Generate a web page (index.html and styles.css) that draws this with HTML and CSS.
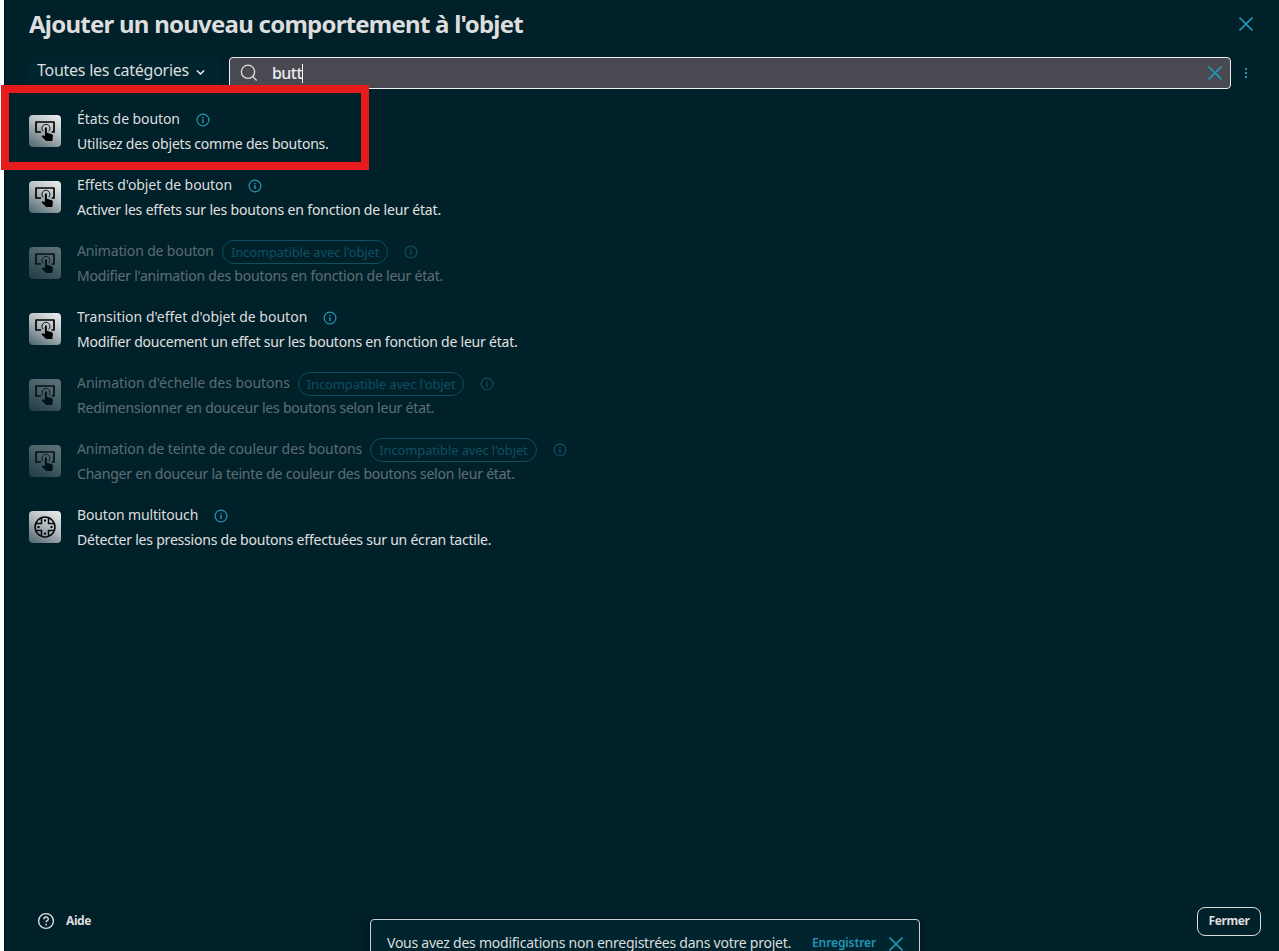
FILE: index.html
```html
<!DOCTYPE html>
<html lang="fr">
<head>
<meta charset="utf-8">
<title>Ajouter un nouveau comportement à l'objet</title>
<link rel="stylesheet" href="styles.css">
</head>
<body>
<svg class="sprite" aria-hidden="true">
  <symbol id="touch" viewBox="0 0 32 32">
    <path d="M12 17H7V7H25V17H22.500" fill="none" stroke="#000" stroke-width="1.700" stroke-linejoin="round"/>
    <path d="M14.300 16.300a4 4 0 1 1 5.300 0" fill="none" stroke="#000" stroke-width=".9"/>
    <path d="M15.900 12.900q1-1.400 2 0V17.800l5 1.400q1.200.4 1 1.800L23.300 26h-6.200l-4.500-4.600 1-1.100 2.300.7z"/>
  </symbol>
  <symbol id="pad" viewBox="0 0 32 32">
    <g fill="none" stroke="#050808" stroke-width="1.500">
      <circle cx="16" cy="16" r="10"/>
      <path d="M12.500 7v5.500H7M19.500 7v5.500H25M12.500 25v-5.500H7M19.500 25v-5.500H25"/>
    </g>
    <path d="M15 8.500h2v2h-2zM15 21.500h2v2h-2zM8.500 15h2v2h-2zM21.500 15h2v2h-2z"/>
  </symbol>
  <symbol id="info" viewBox="0 0 14 14">
    <circle cx="7" cy="7" r="5.900" fill="none" stroke="currentColor" stroke-width="1.200"/>
    <path d="M6.300 4h1.400v1.200H6.300zM6 6.200h1.700v3.800H6.300V7.200H6z" fill="currentColor"/>
  </symbol>
  <symbol id="cross" viewBox="0 0 14 14">
    <path d="M.5.500l13 13M13.500.500l-13 13" fill="none" stroke="currentColor" stroke-width="1.600"/>
  </symbol>
</svg>
<main class="dialog">
  <header class="title-row">
    <h1>Ajouter un nouveau comportement à l'objet</h1>
    <svg class="cross"><use href="#cross"/></svg>
  </header>
  <div class="toolbar">
    <div class="select">
      <span>Toutes les catégories</span>
      <svg class="chevron" viewBox="0 0 10 7"><path d="M1 1.200l4 4 4-4" fill="none" stroke="currentColor" stroke-width="1.700"/></svg>
    </div>
    <div class="search">
      <svg class="magnifier" viewBox="0 0 18 18"><circle cx="8" cy="7.800" r="6.600"/><path d="M12.700 12.500l4 4"/></svg>
      <span class="query">butt</span><i class="caret"></i>
      <svg class="cross"><use href="#cross"/></svg>
    </div>
    <svg class="more" viewBox="0 0 4 12"><path d="M1 1h2v2H1zM1 5h2v2H1zM1 9h2v2H1z" fill="currentColor"/></svg>
  </div>
  <ul class="list">
    <li class="item">
      <svg class="thumb"><use href="#touch"/></svg>
      <div class="body">
        <div class="heading"><span class="name snug">États de bouton</span><svg class="info"><use href="#info"/></svg></div>
        <p>Utilisez des objets comme des boutons.</p>
      </div>
    </li>
    <li class="item">
      <svg class="thumb"><use href="#touch"/></svg>
      <div class="body">
        <div class="heading"><span class="name snug">Effets d'objet de bouton</span><svg class="info"><use href="#info"/></svg></div>
        <p class="loose">Activer les effets sur les boutons en fonction de leur état.</p>
      </div>
    </li>
    <li class="item disabled">
      <svg class="thumb"><use href="#touch"/></svg>
      <div class="body">
        <div class="heading"><span class="name tight">Animation de bouton</span><span class="chip">Incompatible avec l'objet</span><svg class="info"><use href="#info"/></svg></div>
        <p>Modifier l'animation des boutons en fonction de leur état.</p>
      </div>
    </li>
    <li class="item">
      <svg class="thumb"><use href="#touch"/></svg>
      <div class="body">
        <div class="heading"><span class="name wide">Transition d'effet d'objet de bouton</span><svg class="info"><use href="#info"/></svg></div>
        <p>Modifier doucement un effet sur les boutons en fonction de leur état.</p>
      </div>
    </li>
    <li class="item disabled">
      <svg class="thumb"><use href="#touch"/></svg>
      <div class="body">
        <div class="heading"><span class="name">Animation d'échelle des boutons</span><span class="chip">Incompatible avec l'objet</span><svg class="info"><use href="#info"/></svg></div>
        <p>Redimensionner en douceur les boutons selon leur état.</p>
      </div>
    </li>
    <li class="item disabled">
      <svg class="thumb"><use href="#touch"/></svg>
      <div class="body">
        <div class="heading"><span class="name snug">Animation de teinte de couleur des boutons</span><span class="chip">Incompatible avec l'objet</span><svg class="info"><use href="#info"/></svg></div>
        <p>Changer en douceur la teinte de couleur des boutons selon leur état.</p>
      </div>
    </li>
    <li class="item">
      <svg class="thumb"><use href="#pad"/></svg>
      <div class="body">
        <div class="heading"><span class="name tight">Bouton multitouch</span><svg class="info"><use href="#info"/></svg></div>
        <p>Détecter les pressions de boutons effectuées sur un écran tactile.</p>
      </div>
    </li>
  </ul>
  <footer class="footer">
    <div class="help">
      <svg viewBox="0 0 18 18"><circle cx="9" cy="9" r="7.400"/><path d="M6.800 7.300c0-3 4.500-3 4.500-.3 0 1.700-2.200 1.500-2.200 3.300M9.100 11.800v1.600"/></svg>
      <span>Aide</span>
    </div>
    <button class="close">Fermer</button>
  </footer>
</main>
<div class="highlight"></div>
<div class="toast">
  <span class="message">Vous avez des modifications non enregistrées dans votre projet.</span>
  <span class="save">Enregistrer</span>
  <svg class="cross"><use href="#cross"/></svg>
</div>
</body>
</html>
```

FILE: styles.css
```css
* { box-sizing: border-box; }
body {
  margin: 0;
  height: 951px;
  position: relative;
  overflow: hidden;
  padding-left: 4px;
  background: #fbfcff;
  color: #ddd;
  font-family: "Noto Sans", sans-serif;
  font-size: 14px;
  white-space: nowrap;
}
.sprite { display: none; }
.dialog {
  height: 951px;
  display: flex;
  flex-direction: column;
  background: #00202a;
  border-left: 1px solid #001219;
  padding: 0 18px 0 24px;
}
.title-row {
  height: 57px;
  display: flex;
  justify-content: space-between;
  padding: 7px 8px 0 0;
}
h1 {
  margin: 0;
  font-size: 24px;
  line-height: 34px;
  font-weight: 700;
  letter-spacing: -0.76px;
}
.cross { width: 14px; height: 14px; color: #2396b5; flex: none; }
.title-row .cross { margin-top: 10px; }
.toolbar { display: flex; height: 32px; }
.select {
  width: 192px;
  height: 32px;
  margin-right: 8px;
  padding: 0 8px;
  display: flex;
  align-items: center;
  gap: 7px;
  border-radius: 8px;
  background: #00252f;
  font-size: 16px;
  letter-spacing: -0.255px;
}
.select span { line-height: 26px; padding-bottom: 6px; }
.chevron { width: 9px; height: 7px; margin-top: -1px; color: #eee; flex: none; }
.search {
  width: 1002px;
  display: flex;
  align-items: center;
  padding: 0 8px 0 10px;
  border: 1px solid #eee;
  border-radius: 4px;
  background: #494952;
}
.search .cross { margin-left: auto; }
.magnifier {
  width: 18px;
  height: 18px;
  margin: -1px 14px 0 0;
  fill: none;
  stroke: #ddd;
  stroke-width: 1.3;
}
.query { font-size: 16px; font-weight: 500; letter-spacing: -0.55px; color: #eee; }
.caret { width: 1px; height: 19px; background: #fff; }
.more { width: 4px; height: 12px; margin: 10px 0 0 13px; color: #2396b5; }
.list { list-style: none; margin: 0; padding: 9px 0 0; flex: 1; }
.item { height: 66px; display: flex; align-items: center; gap: 16px; }
.thumb {
  width: 32px;
  height: 32px;
  border-radius: 4px;
  background: linear-gradient(210deg, #eef0f0 0%, #b4bcc0 45%, #4d646c 100%);
}
.body { height: 50px; }
.heading { display: flex; align-items: center; height: 25px; line-height: 25px; }
.name { letter-spacing: -0.035px; }
.name.wide { letter-spacing: 0.005px; }
.name.snug { letter-spacing: -0.08px; }
.name.tight { letter-spacing: -0.145px; }
.info { width: 14px; height: 14px; margin: 3px 0 0 16px; color: #2396b5; }
.chip {
  height: 24px;
  margin: 3px 0 0 8px;
  padding: 0 8px;
  border: 1px solid #2396b5;
  border-radius: 12px;
  color: #2396b5;
  font-size: 13px;
  line-height: 23px;
  letter-spacing: -0.13px;
}
.item p { margin: 0; line-height: 25px; letter-spacing: -0.215px; color: #e0e0e0; }
.item p.loose { letter-spacing: -0.165px; }
.disabled > .thumb, .disabled .name, .disabled p { opacity: 0.4; }
.disabled .chip, .disabled .info { opacity: 0.4; }
.footer {
  height: 60px;
  display: flex;
  justify-content: space-between;
  align-items: center;
  font-size: 12px;
  font-weight: 700;
  letter-spacing: -0.4px;
}
.help { display: flex; align-items: center; gap: 11px; padding-left: 8px; }
.help span { padding-bottom: 2px; }
.help svg { width: 18px; height: 18px; fill: none; stroke: #ddd; stroke-width: 1.4; }
.close {
  width: 64px;
  height: 29px;
  padding: 0 0 2px;
  border: 1px solid #ddd;
  border-radius: 8px;
  background: none;
  color: inherit;
  font: inherit;
  letter-spacing: inherit;
}
.highlight {
  position: absolute;
  left: 1px;
  top: 85px;
  width: 368px;
  height: 85px;
  border: 8px solid #e61c1c;
}
.toast {
  position: absolute;
  left: 370px;
  top: 919px;
  width: 550px;
  height: 48px;
  padding: 0 16px;
  display: flex;
  align-items: center;
  border: 1px solid #ccd2d4;
  border-radius: 4px;
  background: #00252f;
  box-shadow: 0 3px 8px #0008;
}
.message { letter-spacing: -0.243px; margin-right: 21px; padding-bottom: 1px; }
.save { font-size: 12px; font-weight: 600; letter-spacing: -0.11px; color: #2396b5; margin-right: 13px; padding-bottom: 1px; }
.toast .cross { margin-top: 2px; }
```
